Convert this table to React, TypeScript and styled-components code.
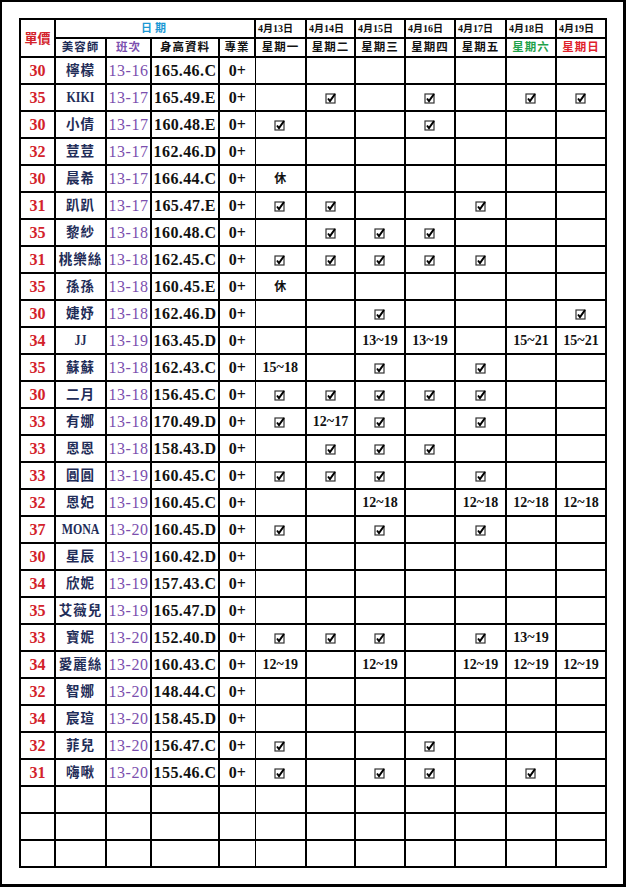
import React from "react"
import styled, { createGlobalStyle } from "styled-components"

const GlobalStyle = createGlobalStyle`
    html, body {
        margin: 0;
        padding: 0;
        background: #ffffff;
    }
    body {
        font-family: "Liberation Serif", "Noto Sans CJK TC", serif;
    }
`;

const Page = styled.div`
    width: 627px;
    height: 888px;
    box-sizing: border-box;
    background: #ffffff;
`;

const Frame = styled.div`
    width: 626px;
    height: 887px;
    box-sizing: border-box;
    border: 2px solid #000;
    border-right-width: 3px;
    border-bottom-width: 3px;
    padding: 16px 0 0 17px;
`;

const Sheet = styled.table`
    border-collapse: collapse;
    table-layout: fixed;
    width: 588px;
    font-weight: 700;
    color: #111;
`;

const HeadRow = styled.tr`
    height: 19px;
`;

const BodyRow = styled.tr`
    height: 27px;
`;

const Cell = styled.td<{ $thin?: "left" | "right" }>`
    border: 2px solid #000;
    ${props => props.$thin === "left" ? `border-left-width: 1px;` : ``}
    ${props => props.$thin === "right" ? `border-right-width: 1px;` : ``}
    padding: 0;
    text-align: center;
    vertical-align: middle;
    white-space: nowrap;
    overflow: hidden;
    line-height: 1;
`;

const PriceHead = styled(Cell)`
    color: #d3222b;
    font-size: 13px;
`;

const DateGroup = styled(Cell)`
    color: #1c98d4;
    font-size: 11px;
    letter-spacing: 3px;
`;

const DateHead = styled(Cell)`
    font-size: 10px;
    text-align: left;
    padding-left: 2px;
    color: #111;
`;

const ColHead = styled(Cell)<{ $tone?: string }>`
    font-size: 11.5px;
    letter-spacing: 1px;
    color: ${props => props.$tone || "#111"};
`;

const Price = styled(Cell)`
    color: #d3222b;
    font-size: 16px;
`;

const Name = styled(Cell)<{ $latin?: boolean }>`
    color: #1f2d58;
    font-size: ${props => props.$latin ? "14px" : "13.5px"};
    letter-spacing: ${props => props.$latin ? "0" : "1px"};
    transform: ${props => props.$latin ? "scaleX(0.85)" : "none"};
`;

const Shift = styled(Cell)`
    color: #7b4fae;
    font-size: 16px;
    font-weight: 400;
    letter-spacing: 0.5px;
`;

const Body = styled(Cell)`
    font-size: 16px;
    letter-spacing: 0.4px;
`;

const Pro = styled(Cell)`
    font-size: 16px;
`;

const Day = styled(Cell)`
    font-size: 14px;
`;

const Rest = styled.span`
    font-family: "Noto Sans CJK TC", sans-serif;
    font-size: 12px;
`;

const Tick = () => (
    <svg width="12" height="12" viewBox="0 0 12 12" style={{ display: "block", margin: "0 auto" }}>
        <rect x="1" y="2" width="9" height="9" fill="#fff" stroke="#333" strokeWidth="1.2" />
        <path d="M3 6.5 L5 9 L10 2" fill="none" stroke="#000" strokeWidth="2" />
    </svg>
);

const days = [
    { date: "4月13日", label: "星期一", tone: "#111" },
    { date: "4月14日", label: "星期二", tone: "#111" },
    { date: "4月15日", label: "星期三", tone: "#111" },
    { date: "4月16日", label: "星期四", tone: "#111" },
    { date: "4月17日", label: "星期五", tone: "#111" },
    { date: "4月18日", label: "星期六", tone: "#1fa24a" },
    { date: "4月19日", label: "星期日", tone: "#e0212b" },
];

type Staff = [string, string, string, string, string[]];

// v = checked, 休 = day off, anything else is printed as is
const staff: Staff[] = [
    ["30", "檸檬", "13-16", "165.46.C", ["", "", "", "", "", "", ""]],
    ["35", "KIKI", "13-17", "165.49.E", ["", "v", "", "v", "", "v", "v"]],
    ["30", "小倩", "13-17", "160.48.E", ["v", "", "", "v", "", "", ""]],
    ["32", "荳荳", "13-17", "162.46.D", ["", "", "", "", "", "", ""]],
    ["30", "晨希", "13-17", "166.44.C", ["休", "", "", "", "", "", ""]],
    ["31", "趴趴", "13-17", "165.47.E", ["v", "v", "", "", "v", "", ""]],
    ["35", "黎紗", "13-18", "160.48.C", ["", "v", "v", "v", "", "", ""]],
    ["31", "桃樂絲", "13-18", "162.45.C", ["v", "v", "v", "v", "v", "", ""]],
    ["35", "孫孫", "13-18", "160.45.E", ["休", "", "", "", "", "", ""]],
    ["30", "婕妤", "13-18", "162.46.D", ["", "", "v", "", "", "", "v"]],
    ["34", "JJ", "13-19", "163.45.D", ["", "", "13~19", "13~19", "", "15~21", "15~21"]],
    ["35", "蘇蘇", "13-18", "162.43.C", ["15~18", "", "v", "", "v", "", ""]],
    ["30", "二月", "13-18", "156.45.C", ["v", "v", "v", "v", "v", "", ""]],
    ["33", "有娜", "13-18", "170.49.D", ["v", "12~17", "v", "", "v", "", ""]],
    ["33", "恩恩", "13-18", "158.43.D", ["", "v", "v", "v", "", "", ""]],
    ["33", "圓圓", "13-19", "160.45.C", ["v", "v", "v", "", "v", "", ""]],
    ["32", "恩妃", "13-19", "160.45.C", ["", "", "12~18", "", "12~18", "12~18", "12~18"]],
    ["37", "MONA", "13-20", "160.45.D", ["v", "", "v", "", "v", "", ""]],
    ["30", "星辰", "13-19", "160.42.D", ["", "", "", "", "", "", ""]],
    ["34", "欣妮", "13-19", "157.43.C", ["", "", "", "", "", "", ""]],
    ["35", "艾薇兒", "13-19", "165.47.D", ["", "", "", "", "", "", ""]],
    ["33", "寶妮", "13-20", "152.40.D", ["v", "v", "v", "", "v", "13~19", ""]],
    ["34", "愛麗絲", "13-20", "160.43.C", ["12~19", "", "12~19", "", "12~19", "12~19", "12~19"]],
    ["32", "智娜", "13-20", "148.44.C", ["", "", "", "", "", "", ""]],
    ["34", "宸瑄", "13-20", "158.45.D", ["", "", "", "", "", "", ""]],
    ["32", "菲兒", "13-20", "156.47.C", ["v", "", "", "v", "", "", ""]],
    ["31", "嗨啾", "13-20", "155.46.C", ["v", "", "v", "v", "", "v", ""]],
];

const colWidths = [35, 51, 45, 68, 36, 51, 49, 50, 50, 51, 50, 50];

const renderDay = (value: string) => {
    if (value === "v") return <Tick />;
    if (value === "休") return <Rest>休</Rest>;
    return value;
};

export default function App() {
    return (
        <Page>
            <GlobalStyle />
            <Frame>
                <Sheet>
                    <colgroup>
                        {colWidths.map((w, i) => <col key={i} style={{ width: w }} />)}
                    </colgroup>
                    <thead>
                        <HeadRow>
                            <PriceHead rowSpan={2}>單價</PriceHead>
                            <DateGroup colSpan={4}>日期</DateGroup>
                            {days.map(d => <DateHead key={d.date}>{d.date}</DateHead>)}
                        </HeadRow>
                        <HeadRow>
                            <ColHead $tone="#1f2d58">美容師</ColHead>
                            <ColHead $tone="#7b4fae">班次</ColHead>
                            <ColHead>身高資料</ColHead>
                            <ColHead>專業</ColHead>
                            {days.map(d => <ColHead key={d.label} $tone={d.tone}>{d.label}</ColHead>)}
                        </HeadRow>
                    </thead>
                    <tbody>
                        {staff.map(([price, name, shift, body, week]) => (
                            <BodyRow key={name}>
                                <Price>{price}</Price>
                                <Name $latin={/^[A-Z]+$/.test(name)}>{name}</Name>
                                <Shift>{shift}</Shift>
                                <Body>{body}</Body>
                                <Pro $thin="right">0+</Pro>
                                {week.map((v, i) => (
                                    <Day key={i} $thin={i === 0 ? "left" : undefined}>{renderDay(v)}</Day>
                                ))}
                            </BodyRow>
                        ))}
                        {[0, 1, 2].map(r => (
                            <BodyRow key={`blank-${r}`}>
                                {colWidths.map((_, i) => (
                                    <Cell key={i} $thin={i === 4 ? "right" : i === 5 ? "left" : undefined} />
                                ))}
                            </BodyRow>
                        ))}
                    </tbody>
                </Sheet>
            </Frame>
        </Page>
    );
}
